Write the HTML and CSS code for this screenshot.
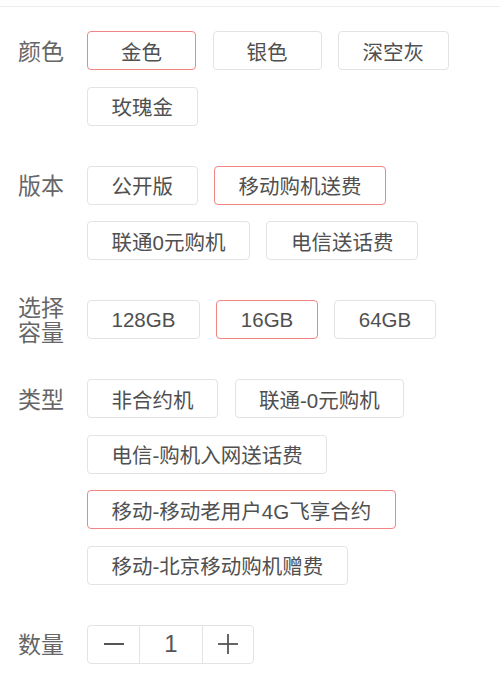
FILE: index.html
```html
<!DOCTYPE html>
<html lang="zh-CN">
<head>
<meta charset="utf-8">
<title>商品规格</title>
<link rel="stylesheet" href="styles.css">
</head>
<body>
<div class="topline"></div>
<div class="page">
  <div class="group">
    <div class="label"><span>颜色</span></div>
    <div class="options options-fixed">
      <div class="opt active">金色</div>
      <div class="opt">银色</div>
      <div class="opt">深空灰</div>
      <div class="opt">玫瑰金</div>
    </div>
  </div>
  <div class="group">
    <div class="label"><span>版本</span></div>
    <div class="options">
      <div class="opt">公开版</div>
      <div class="opt active">移动购机送费</div>
      <div class="opt">联通0元购机</div>
      <div class="opt">电信送话费</div>
    </div>
  </div>
  <div class="group">
    <div class="label"><span>选择容量</span></div>
    <div class="options">
      <div class="opt">128GB</div>
      <div class="opt active">16GB</div>
      <div class="opt">64GB</div>
    </div>
  </div>
  <div class="group">
    <div class="label"><span>类型</span></div>
    <div class="options">
      <div class="opt">非合约机</div>
      <div class="opt">联通-0元购机</div>
      <div class="opt">电信-购机入网送话费</div>
      <div class="opt active">移动-移动老用户4G飞享合约</div>
      <div class="opt">移动-北京移动购机赠费</div>
    </div>
  </div>
  <div class="group">
    <div class="label"><span>数量</span></div>
    <div class="stepper">
      <div class="step step-minus">
        <svg width="20" height="20" viewBox="0 0 20 20"><line x1="0" y1="10" x2="20" y2="10" stroke="#555" stroke-width="2"/></svg>
      </div>
      <div class="step step-num">1</div>
      <div class="step step-plus">
        <svg width="20" height="20" viewBox="0 0 20 20"><line x1="0" y1="10" x2="20" y2="10" stroke="#555" stroke-width="1.8"/><line x1="10" y1="0" x2="10" y2="20" stroke="#555" stroke-width="1.8"/></svg>
      </div>
    </div>
  </div>
</div>
</body>
</html>
```

FILE: styles.css
```css
html, body {
  margin: 0;
  padding: 0;
  background: #fff;
}
body {
  font-family: "Liberation Sans", "Noto Sans CJK SC", sans-serif;
  color: #555;
}
.topline {
  margin-top: 6px;
  height: 1px;
  background: #ececec;
}
.page {
  padding: 24px 0 0 18px;
}
.group {
  display: flex;
  align-items: flex-start;
  margin-bottom: 40px;
}
.label {
  width: 69px;
  flex: none;
  height: 39px;
  display: flex;
  align-items: center;
  font-size: 23px;
  line-height: 25px;
  color: #666;
}
.label span {
  display: block;
  width: 48px;
  padding-top: 3px;
}
.options {
  display: flex;
  flex-wrap: wrap;
  gap: 16.5px 16.5px;
  width: 400px;
}
.opt {
  box-sizing: border-box;
  height: 39px;
  padding: 0 23.5px;
  border: 1px solid #e3e3e3;
  border-radius: 4px;
  display: flex;
  align-items: center;
  justify-content: center;
  font-size: 20.5px;
  color: #505050;
  white-space: nowrap;
}
.options-fixed .opt {
  min-width: 109px;
}
.opt.active {
  border-color: #ef8585;
}
.stepper {
  display: flex;
  height: 39px;
  box-sizing: border-box;
  border: 1px solid #e3e3e3;
  border-radius: 4px;
}
.step {
  display: flex;
  align-items: center;
  justify-content: center;
}
.step-minus {
  width: 51px;
}
.step-num {
  width: 62px;
  border-left: 1px solid #e3e3e3;
  border-right: 1px solid #e3e3e3;
  font-size: 24px;
  color: #555;
}
.step-plus {
  width: 50px;
}
```
